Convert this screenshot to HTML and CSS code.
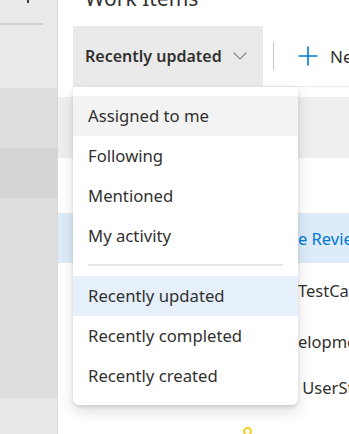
FILE: index.html
```html
<!DOCTYPE html>
<html lang="en">
<head>
    <meta charset="UTF-8">
    <meta name="viewport" content="width=device-width, initial-scale=1.0">
    <title>Work Items</title>
    <link rel="stylesheet" href="styles.css">
</head>
<body>
    <div class="nav">
        <div class="nav-top">
            <div class="nav-icon-tail"></div>
            <div class="nav-rule"></div>
        </div>
        <div class="nav-group">
            <div class="nav-item selected"></div>
        </div>
        <div class="nav-rest"></div>
    </div>

    <div class="main">
        <h1 class="title">Work Items</h1>

        <div class="toolbar">
            <button class="view-button">
                <span>Recently updated</span>
                <svg class="chevron" width="14" height="8" viewBox="0 0 14 8">
                    <path d="M0.5 0.5 L7 7 L13.5 0.5" fill="none" stroke="#8a8886" stroke-width="1.1"/>
                </svg>
            </button>
            <div class="toolbar-sep"></div>
            <button class="new-button">
                <svg width="20" height="20" viewBox="0 0 20 20">
                    <path d="M10 0.5 V19.5 M0.5 10 H19.5" fill="none" stroke="#0078d4" stroke-width="1.6"/>
                </svg>
                <span>New</span>
            </button>
        </div>

        <div class="list">
            <div class="list-header"></div>
            <div class="row tall"><span class="row-title"></span></div>
            <div class="row active"><span class="row-title link">e Review</span></div>
            <div class="row tall"><span class="row-title">TestCase</span></div>
            <div class="row"><span class="row-title">elopment</span></div>
            <div class="row"><span class="row-title">&nbsp;UserStory</span></div>
            <div class="row last">
                <span class="row-icon"></span>
                <span class="row-title">Task</span>
            </div>
        </div>

        <!-- view picker, open -->
        <div class="menu">
            <div class="menu-item hovered">Assigned to me</div>
            <div class="menu-item">Following</div>
            <div class="menu-item">Mentioned</div>
            <div class="menu-item">My activity</div>
            <div class="menu-divider"></div>
            <div class="menu-item selected">Recently updated</div>
            <div class="menu-item">Recently completed</div>
            <div class="menu-item">Recently created</div>
        </div>
    </div>
</body>
</html>
```

FILE: styles.css
```css
body {
    margin: 0;
    width: 349px;
    height: 434px;
    overflow: hidden;
    display: flex;
    font-family: "Noto Sans", "Open Sans", sans-serif;
    color: #323130;
    background-color: #fff;
}

/* left navigation */
.nav {
    width: 57px;
    flex-shrink: 0;
    border-right: 1px solid #d8d8d8;
    display: flex;
    flex-direction: column;
    background-color: #eaeaea;
}
.nav-top {
    height: 88px;
}
.nav-icon-tail {
    width: 2px;
    height: 3px;
    margin-left: 27px;
    background-color: #3a3a3a;
}
.nav-rule {
    width: 43px;
    height: 2px;
    margin-top: 20px;
    background-color: #cfcfcf;
}
.nav-group {
    height: 250px;
    padding-top: 60px;
    background-color: #dedede;
}
.nav-item {
    height: 50px;
}
.nav-item.selected {
    background-color: #d4d4d4;
}
.nav-rest {
    flex: 1;
    background-color: #e8e8e8;
}

/* main area */
.main {
    flex: 1;
    position: relative;
    overflow: hidden;
}
.title {
    margin: -12px 0 17px;
    padding-left: 27px;
    height: 21px;
    font-size: 21px;
    line-height: 21px;
    font-weight: 400;
    white-space: nowrap;
}
.toolbar {
    display: flex;
    align-items: center;
    height: 60px;
    margin-left: 15px;
    border-bottom: 1px solid #ededed;
}
.view-button {
    display: flex;
    align-items: center;
    justify-content: space-between;
    flex-shrink: 0;
    box-sizing: border-box;
    width: 190px;
    height: 60px;
    padding: 0 16px 0 12px;
    border: none;
    background-color: #eaeaea;
    font-family: inherit;
    font-size: 16px;
    font-weight: 600;
    color: #323130;
    white-space: nowrap;
}
.toolbar-sep {
    flex-shrink: 0;
    width: 1px;
    height: 28px;
    margin: 0 24px 0 10px;
    background-color: #c8c6c4;
}
.new-button {
    display: flex;
    align-items: center;
    flex-shrink: 0;
    gap: 12px;
    padding: 0;
    border: none;
    background: none;
    font-family: inherit;
    font-size: 17px;
    color: #323130;
    white-space: nowrap;
}

/* list behind the menu */
.list {
    margin-top: 10px;
}
.list-header {
    height: 61px;
    background-color: #efefef;
}
.row {
    display: flex;
    align-items: center;
    height: 46px;
    padding-left: 240px;
    font-size: 16.5px;
    white-space: nowrap;
}
.row.tall {
    height: 55px;
}
.row.active {
    height: 50px;
    background-color: #deecf9;
}
.row.last {
    height: 62px;
}
.row-title.link {
    color: #0078d4;
}
.row-icon {
    align-self: flex-start;
    flex-shrink: 0;
    width: 9px;
    height: 9px;
    margin: 17px 55px 0 -55px;
    border: 2px solid #f6cf1f;
    border-radius: 50%;
    box-sizing: border-box;
}

/* dropdown */
.menu {
    position: absolute;
    left: 15px;
    top: 87px;
    width: 225px;
    padding: 9px 0;
    background-color: #fff;
    border-radius: 2px 2px 6px 6px;
    box-shadow: 0 6.4px 14.4px rgba(0, 0, 0, 0.13), 0 1.2px 3.6px rgba(0, 0, 0, 0.11);
}
.menu-item {
    height: 40px;
    line-height: 40px;
    padding-left: 15px;
    font-size: 16.7px;
    white-space: nowrap;
}
.menu-item.hovered {
    background-color: #f3f3f3;
}
.menu-item.selected {
    background-color: #e5f0fb;
}
.menu-divider {
    height: 2px;
    margin: 8px 15px 10px;
    background-color: #e5e5e5;
}
```
